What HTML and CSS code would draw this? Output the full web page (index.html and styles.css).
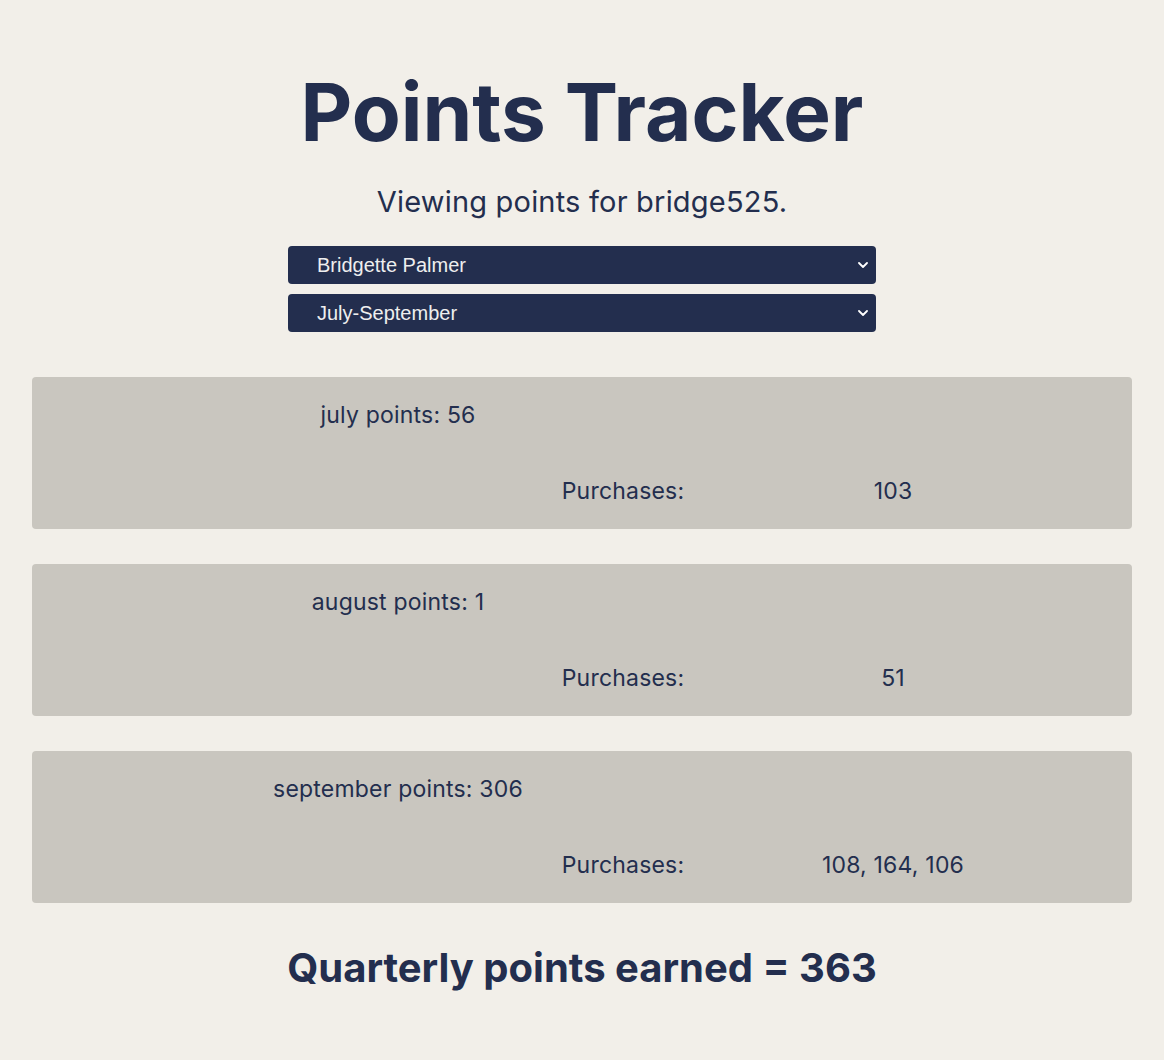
FILE: index.html
```html
<!DOCTYPE html>
<html lang="en">
<head>
<meta charset="utf-8">
<title>Points Tracker</title>
<link rel="stylesheet" href="styles.css">
</head>
<body>
<main class="page">
  <header class="header">
    <h1 class="title">Points Tracker</h1>
    <p class="subtitle">Viewing points for bridge525.</p>
    <div class="controls">
      <div class="select-wrap">
        <select class="select">
          <option>Bridgette Palmer</option>
        </select>
        <svg class="chevron" width="10" height="6" viewBox="0 0 10 6"><path d="M1 1 L5 5 L9 1" fill="none" stroke="#fff" stroke-width="1.8" stroke-linecap="round" stroke-linejoin="round"/></svg>
      </div>
      <div class="select-wrap">
        <select class="select">
          <option>July-September</option>
        </select>
        <svg class="chevron" width="10" height="6" viewBox="0 0 10 6"><path d="M1 1 L5 5 L9 1" fill="none" stroke="#fff" stroke-width="1.8" stroke-linecap="round" stroke-linejoin="round"/></svg>
      </div>
    </div>
  </header>

  <section class="months">
    <div class="card">
      <div class="card-title">july points: 56</div>
      <div class="label">Purchases:</div>
      <div class="value">103</div>
    </div>
    <div class="card">
      <div class="card-title">august points: 1</div>
      <div class="label">Purchases:</div>
      <div class="value">51</div>
    </div>
    <div class="card">
      <div class="card-title">september points: 306</div>
      <div class="label">Purchases:</div>
      <div class="value">108, 164, 106</div>
    </div>
  </section>

  <h2 class="total">Quarterly points earned = 363</h2>
</main>
</body>
</html>
```

FILE: styles.css
```css
html, body {
  margin: 0;
  padding: 0;
}
body {
  background: #f2efe9;
  color: #232e4e;
  font-family: "Inter", "Noto Sans", sans-serif;
}
.page {
  padding: 0 32px;
  display: flex;
  flex-direction: column;
}
.header {
  display: flex;
  flex-direction: column;
  align-items: center;
  padding-top: 66px;
}
.title {
  margin: 0;
  font-size: 80px;
  line-height: 92px;
  font-weight: 700;
}
.subtitle {
  margin: 27px 0 0;
  font-size: 29px;
  line-height: 34px;
  font-weight: 400;
  letter-spacing: 0.2px;
}
.controls {
  margin-top: 27px;
  display: flex;
  flex-direction: column;
  gap: 10px;
  width: 588px;
}
.select-wrap {
  position: relative;
}
.select {
  appearance: none;
  -webkit-appearance: none;
  width: 100%;
  height: 38px;
  background: #232e4e;
  color: #eeeeee;
  border: none;
  border-radius: 4px;
  padding: 0 0 0 29px;
  font-family: "Liberation Sans", Arial, sans-serif;
  font-size: 20px;
  outline: none;
}
.chevron {
  position: absolute;
  right: 8px;
  top: 16px;
  pointer-events: none;
}
.months {
  margin-top: 45px;
  display: flex;
  flex-direction: column;
  gap: 35px;
}
.card {
  background: #c9c6bf;
  border-radius: 4px;
  padding: 24px 0;
  display: grid;
  grid-template-columns: 450px 282px 258px 110px;
  row-gap: 48px;
  font-size: 23px;
  line-height: 28px;
  letter-spacing: 0.2px;
}
.card-title {
  grid-column: 1 / 3;
  text-align: center;
}
.label {
  grid-column: 2;
  text-align: center;
}
.value {
  grid-column: 3;
  text-align: center;
}
.total {
  margin: 40px 0 0;
  text-align: center;
  font-size: 40px;
  line-height: 50px;
  font-weight: 700;
}
```
